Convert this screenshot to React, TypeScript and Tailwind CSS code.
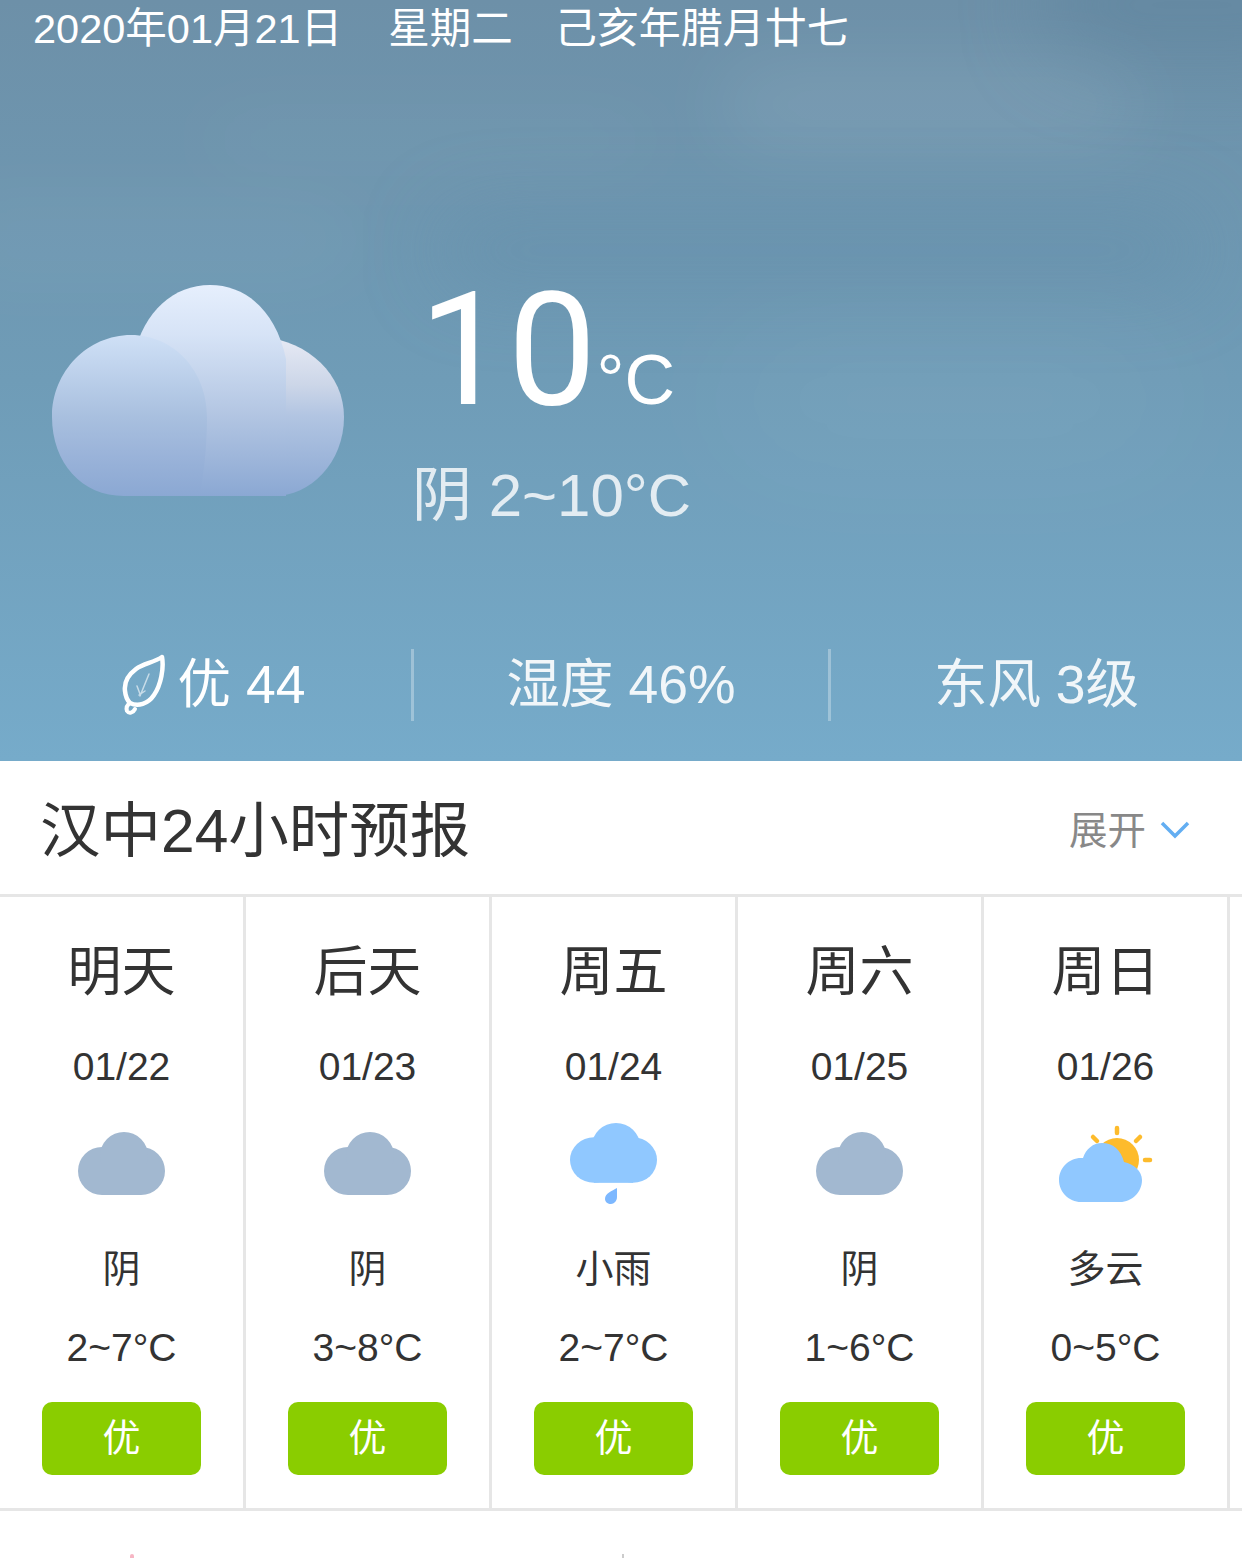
import React from "react";

interface DayForecast {
  label: string;
  date: string;
  icon: "overcast" | "rain" | "partly";
  weather: string;
  temp: string;
}

const days: DayForecast[] = [
  { label: "明天", date: "01/22", icon: "overcast", weather: "阴", temp: "2~7°C" },
  { label: "后天", date: "01/23", icon: "overcast", weather: "阴", temp: "3~8°C" },
  { label: "周五", date: "01/24", icon: "rain", weather: "小雨", temp: "2~7°C" },
  { label: "周六", date: "01/25", icon: "overcast", weather: "阴", temp: "1~6°C" },
  { label: "周日", date: "01/26", icon: "partly", weather: "多云", temp: "0~5°C" },
];

function BigCloud() {
  return (
    <svg width="294" height="213" viewBox="0 0 294 213" className="block">
      <defs>
        <linearGradient id="cloudRight" x1="0" y1="50" x2="0" y2="211" gradientUnits="userSpaceOnUse">
          <stop offset="0" stopColor="#e8ebf5" />
          <stop offset="0.31" stopColor="#ccd6e8" />
          <stop offset="0.5" stopColor="#b2c5e2" />
          <stop offset="1" stopColor="#8ba8d3" />
        </linearGradient>
        <linearGradient id="cloudMid" x1="0" y1="0" x2="0" y2="211" gradientUnits="userSpaceOnUse">
          <stop offset="0" stopColor="#e6effd" />
          <stop offset="0.24" stopColor="#d6e3f6" />
          <stop offset="0.62" stopColor="#b2c5e2" />
          <stop offset="1" stopColor="#8ba8d3" />
        </linearGradient>
        <linearGradient id="cloudLeft" x1="0" y1="50" x2="0" y2="211" gradientUnits="userSpaceOnUse">
          <stop offset="0" stopColor="#cfe0f6" />
          <stop offset="0.5" stopColor="#a9c0df" />
          <stop offset="0.75" stopColor="#9ab3d9" />
          <stop offset="1" stopColor="#8ba8d3" />
        </linearGradient>
      </defs>
      <path d="M210 52C257 56 292 90 292 132C292 178 258 211 222 211H150V60Z" fill="url(#cloudRight)" />
      <path d="M82 70C92 26 122 0 158 0C194 0 224 26 234 74V211H82Z" fill="url(#cloudMid)" />
      <path d="M79 50C122 50 155 86 155 132C155 170 150 196 148 211H72C30 211 0 178 0 132C0 86 36 50 79 50Z" fill="url(#cloudLeft)" />
    </svg>
  );
}

function LeafIcon() {
  return (
    <svg width="44" height="62" viewBox="0 0 44 62" fill="none" className="block">
      <path
        d="M40 3C31 9 22 9 14 15C6 21 2 29 3 37C3.500 42 5 46 8 49C16 53 26 50 32 41C39 31 42 14 40 3Z"
        stroke="white"
        strokeWidth="4.500"
        strokeLinejoin="round"
      />
      <path d="M8 49C5 51 4 54 5 57C7 60 11 59 13 55" stroke="white" strokeWidth="4" strokeLinecap="round" />
      <path d="M27 20L18 42M15 32L18 40M23 37L17 41" stroke="white" strokeOpacity="0.6" strokeWidth="1.500" strokeLinecap="round" />
    </svg>
  );
}

// three lobes over a flat base, same shape for every cloud icon
function CloudShape({ fill, x = 0, y = 0, sy = 1 }: { fill: string; x?: number; y?: number; sy?: number }) {
  return (
    <g transform={`translate(${x} ${y}) scale(1 ${sy})`} fill={fill}>
      <circle cx="24" cy="39" r="24" />
      <circle cx="63" cy="39" r="24" />
      <circle cx="46" cy="24" r="24" />
      <rect x="24" y="20" width="39" height="43" />
    </g>
  );
}

function WeatherIcon({ kind }: { kind: DayForecast["icon"] }) {
  if (kind === "rain") {
    return (
      <svg width="100" height="90" viewBox="0 0 100 90" className="block">
        <CloudShape fill="#90c8ff" x={6} y={3} sy={0.95} />
        <path d="M53 68C48 71 41 73 41 79C41 82 44 84 47 84C50 84 53 81 53 77Z" fill="#7db8ff" />
      </svg>
    );
  }
  if (kind === "partly") {
    return (
      <svg width="100" height="90" viewBox="0 0 100 90" className="block">
        <circle cx="61" cy="40" r="22" fill="#fdbb2c" />
        <g stroke="#fdbb2c" strokeWidth="4.500" strokeLinecap="round">
          <path d="M61 8V13" />
          <path d="M37 17L41 21" />
          <path d="M84 17L80 21" />
          <path d="M89 40H94" />
        </g>
        <path
          d="M25 82C13 82 3 72 3 60C3 48 13 38 25 38H27C30 29 37 23 46 23C57 23 65 30 68 42C78 44 86 51 86 60C86 72 76 82 64 82Z"
          fill="#90c8ff"
        />
      </svg>
    );
  }
  return (
    <svg width="100" height="90" viewBox="0 0 100 90" className="block">
      <CloudShape fill="#a2b8d0" x={6} y={12} />
    </svg>
  );
}

function DayColumn({ day }: { day: DayForecast }) {
  return (
    <div className="flex w-[246px] shrink-0 flex-col items-center border-r-[3px] border-[#e6e6e6] pb-[33px] pt-[48px]">
      <div className="h-[54px] text-[54px] leading-[54px] text-[#333]">{day.label}</div>
      <div className="mt-[46px] h-[44px] text-[39px] leading-[44px] text-[#333]">{day.date}</div>
      <div className="mt-[31px] h-[90px]">
        <WeatherIcon kind={day.icon} />
      </div>
      <div className="mt-[37px] h-[44px] text-[38px] leading-[44px] text-[#333]">{day.weather}</div>
      <div className="mt-[35px] h-[44px] text-[39px] leading-[44px] text-[#333]">{day.temp}</div>
      <div className="mt-[32px] flex h-[73px] w-[159px] items-center justify-center rounded-[10px] bg-[#8acd00] text-[38px] text-white">
        优
      </div>
    </div>
  );
}

export default function App() {
  return (
    <div className="h-[1558px] w-[1242px] overflow-hidden bg-white font-['Liberation_Sans','Noto_Sans_CJK_SC',sans-serif]">
      <section className="relative flex h-[761px] flex-col overflow-hidden bg-gradient-to-b from-[#6d90a8] via-[#6f9cb7] to-[#76abca]">
        {/* soft cloud haze on the sky */}
        <div className="absolute right-[-100px] top-[-50px] h-[110px] w-[300px] rounded-full bg-[#5b819b]/50 blur-2xl" />
        <div className="absolute left-[720px] top-[70px] h-[70px] w-[420px] rounded-full bg-white/10 blur-2xl" />
        <div className="absolute left-[200px] top-[120px] h-[40px] w-[460px] rounded-full bg-white/5 blur-2xl" />
        <div className="absolute left-[440px] top-[215px] h-[70px] w-[760px] rounded-full bg-[#5f89a5]/35 blur-2xl" />
        <div className="absolute left-[-60px] top-[210px] h-[60px] w-[420px] rounded-full bg-white/5 blur-2xl" />
        <div className="absolute left-[720px] top-[340px] h-[120px] w-[460px] rounded-full bg-white/5 blur-3xl" />

        <div className="relative flex h-[58px] pl-[33px] text-[41.500px] leading-[58px] text-white">
          <span>2020年01月21日</span>
          <span className="ml-[46px]">星期二</span>
          <span className="ml-[42px] text-[42px]">己亥年腊月廿七</span>
        </div>

        <div className="relative mt-[227px] flex items-start pl-[52px]">
          <BigCloud />
          <div className="-mt-[15px] ml-[66px] flex flex-col">
            <div className="flex items-baseline pl-[7px] text-white">
              <span className="font-['Roboto',sans-serif] text-[158px] font-normal leading-[160px]">10</span>
              <span className="text-[70px] leading-none">°C</span>
            </div>
            <div className="mt-[31px] text-[60px] leading-[70px] text-white/80">阴 2~10°C</div>
          </div>
        </div>

        <div className="relative mb-[40px] mt-auto flex h-[72px] text-[53.500px] leading-[72px] text-white/90">
          <div className="flex w-[411px] items-center justify-center gap-[12px] pl-[16px]">
            <LeafIcon />
            <span className="text-white">优 44</span>
          </div>
          <div className="w-[3px] bg-white/30" />
          <div className="flex w-[414px] items-center justify-center">湿度 46%</div>
          <div className="w-[3px] bg-white/30" />
          <div className="flex flex-1 items-center justify-center">东风 3级</div>
        </div>
      </section>

      <header className="flex h-[136px] items-center justify-between border-b-[3px] border-[#e6e6e6] pl-[40px] pr-[52px] pt-[7px]">
        <h2 className="text-[60.500px] font-normal text-[#333]">汉中24小时预报</h2>
        <div className="flex items-center gap-[14px] text-[38.500px] text-[#888]">
          <span>展开</span>
          <svg width="30" height="18" viewBox="0 0 30 18" fill="none" className="-mt-[3px] block">
            <path d="M2 2L15 15L28 2" stroke="#63aef2" strokeWidth="3.500" />
          </svg>
        </div>
      </header>

      <div className="flex border-b-[3px] border-[#e6e6e6]">
        {days.map((day) => (
          <DayColumn key={day.date} day={day} />
        ))}
      </div>

      {/* top edge of the next block, cut off by the page bottom */}
      <div className="flex h-[47px] items-end">
        <div className="ml-[130px] h-[4px] w-[4px] rounded-t-full bg-[#f7b6c4]" />
        <div className="ml-[488px] h-[4px] w-[2px] bg-[#cccccc]" />
      </div>
    </div>
  );
}
